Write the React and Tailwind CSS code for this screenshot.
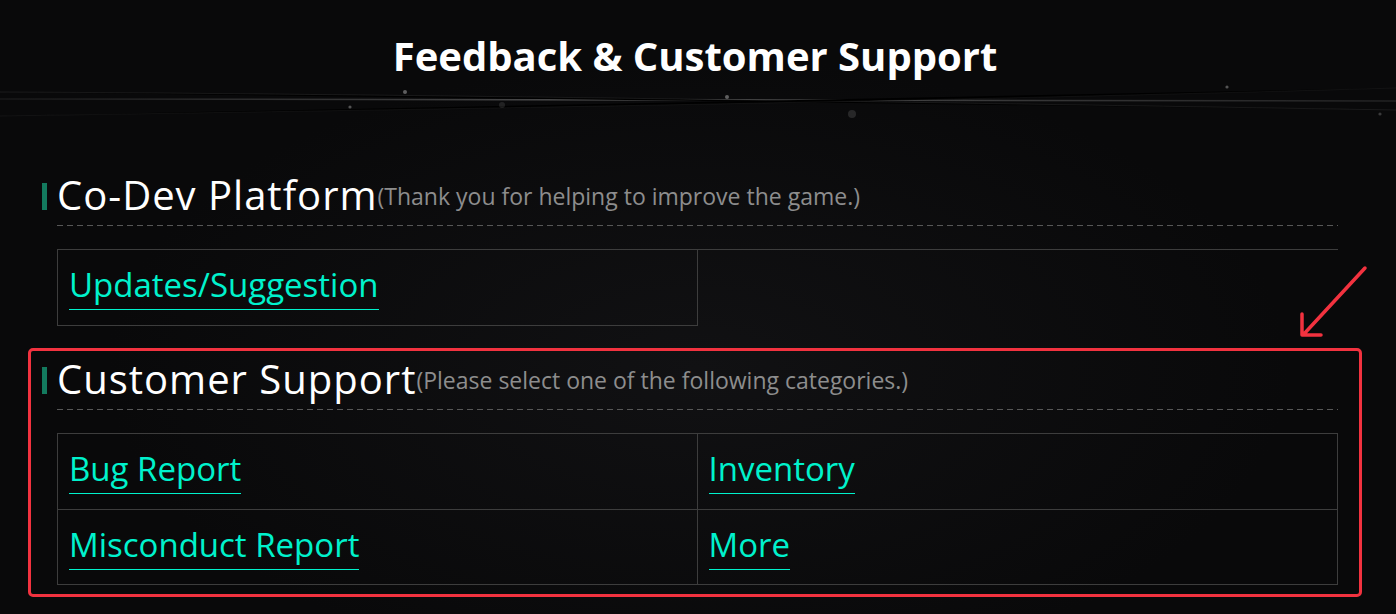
const font = { fontFamily: '"Open Sans", "Noto Sans", sans-serif' };
const linkCls = 'mt-[15px] inline-block border-b border-[#00f2cc] pb-[4px] text-[33px] leading-[40px] text-[#00f2cc]';

function SectionHeading({ title, note }) {
  return (
    <div className="relative">
      <span className="absolute -left-[15px] top-[13px] h-[27px] w-[5px] bg-[#137a5e]" />
      <div className="flex h-[55px] items-start">
        <h2 className="text-[40px] leading-[50px] tracking-[1px] text-white">{title}</h2>
        <span className="mt-[11px] text-[23px] leading-[30px] text-[#8d8d8d]">{note}</span>
      </div>
      <div className="h-px w-full bg-[linear-gradient(to_right,#575757_6px,transparent_6px)] bg-[length:10px_1px]" />
    </div>
  );
}

function Backdrop() {
  return (
    <svg className="pointer-events-none absolute inset-0 h-full w-full" viewBox="0 0 1396 614" preserveAspectRatio="none">
      <defs>
        <linearGradient id="streak" x1="0" x2="1">
          <stop offset="0" stopColor="#fff" stopOpacity="0.06" />
          <stop offset="0.45" stopColor="#fff" stopOpacity="0.28" />
          <stop offset="1" stopColor="#fff" stopOpacity="0.1" />
        </linearGradient>
      </defs>
      <path d="M0 99 L1396 101" stroke="url(#streak)" strokeWidth="1.5" />
      <path d="M0 92 C400 94 900 102 1396 110" stroke="#fff" strokeOpacity="0.08" strokeWidth="1" />
      <path d="M0 116 C500 108 900 102 1396 88" stroke="#fff" strokeOpacity="0.05" strokeWidth="1" />
      <circle cx="405" cy="92" r="2" fill="#fff" fillOpacity="0.35" />
      <circle cx="350" cy="107" r="1.6" fill="#fff" fillOpacity="0.3" />
      <circle cx="727" cy="97" r="2" fill="#fff" fillOpacity="0.35" />
      <circle cx="852" cy="114" r="4" fill="#fff" fillOpacity="0.12" />
      <circle cx="1227" cy="87" r="1.6" fill="#fff" fillOpacity="0.3" />
      <circle cx="1380" cy="114" r="1.6" fill="#fff" fillOpacity="0.2" />
      <circle cx="502" cy="105" r="3" fill="#fff" fillOpacity="0.1" />
    </svg>
  );
}

export default function App() {
  return (
    <div className="relative min-h-[614px] w-full overflow-hidden bg-[#09090a] bg-[radial-gradient(ellipse_at_50%_60%,#111113_0%,#09090a_60%)]" style={font}>
      <Backdrop />
      <div className="relative ml-[28px] w-[1334px] pt-[32px]">
        <h1 className="text-center text-[40px] font-bold leading-[48px] text-white">Feedback &amp; Customer Support</h1>

        <section className="mt-[90px] pl-[29px] pr-[24px]">
          <SectionHeading title="Co-Dev Platform" note="(Thank you for helping to improve the game.)" />
          <div className="mt-[23px] grid grid-cols-2 border-t border-[#3d3d3d]">
            <div className="h-[76px] border-b border-l border-r border-[#3d3d3d] px-[11px]">
              <a href="#" className={linkCls}>Updates/Suggestion</a>
            </div>
            <div className="h-[76px]" />
          </div>
        </section>

        <section className="mt-[22px] rounded-[5px] border-[3px] border-[#f2323f] pb-[9px] pl-[26px] pr-[21px] pt-[3px]">
          <SectionHeading title="Customer Support" note="(Please select one of the following categories.)" />
          <div className="mt-[23px] grid grid-cols-2 border-t border-[#3d3d3d]">
            <div className="h-[76px] border-b border-l border-r border-[#3d3d3d] px-[11px]">
              <a href="#" className={linkCls}>Bug Report</a>
            </div>
            <div className="h-[76px] border-b border-r border-[#3d3d3d] px-[11px]">
              <a href="#" className={linkCls}>Inventory</a>
            </div>
            <div className="h-[75px] border-b border-l border-r border-[#3d3d3d] px-[11px]">
              <a href="#" className={linkCls}>Misconduct Report</a>
            </div>
            <div className="h-[75px] border-b border-r border-[#3d3d3d] px-[11px]">
              <a href="#" className={linkCls}>More</a>
            </div>
          </div>
        </section>

        <svg className="absolute left-[1266px] top-[262px] h-[82px] w-[80px]" viewBox="0 0 80 82" fill="none">
          <path d="M71 6 L9 73 M8 52 L8 73 L27 73" stroke="#f2323f" strokeWidth="3.5" strokeLinecap="round" strokeLinejoin="round" />
        </svg>
      </div>
    </div>
  );
}
